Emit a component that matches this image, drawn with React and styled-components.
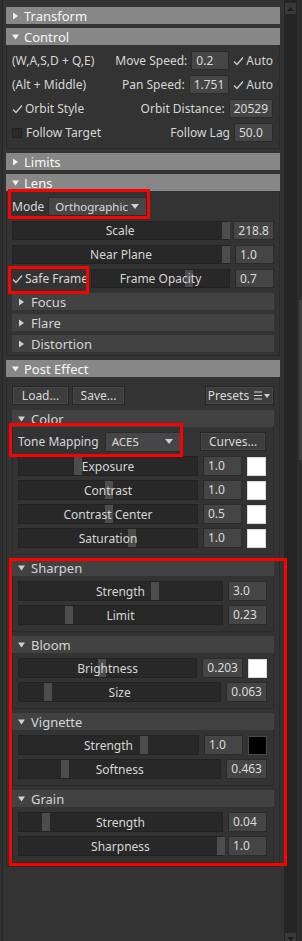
import React from "react";
import styled, { createGlobalStyle } from "styled-components";

const GlobalStyle = createGlobalStyle`
  html, body { margin: 0; padding: 0; background: #333333; }
  body {
    font-family: "Noto Sans", "Open Sans", sans-serif;
    font-size: 12px;
    color: #d4d4d4;
  }
  * { box-sizing: border-box; }
`;

const Page = styled.div`
  position: relative;
  display: flex;
  width: 302px;
  height: 941px;
  overflow: hidden;
  background: #333333;
`;

const Inspector = styled.div`
  flex: 1;
  display: flex;
  flex-direction: column;
  gap: 4px;
  padding: 7px 4px 0 6px;
  background: linear-gradient(to right, #303030 0 2px, #262626 2px 3px, #333333 3px);
`;

const Section = styled.div`
  display: flex;
  flex-direction: column;
`;

const Header = styled.div`
  height: 17px;
  display: flex;
  align-items: center;
  gap: ${(p) => (p.$sub ? 6 : 5)}px;
  padding-left: 6px;
  background: ${(p) => (p.$sub ? "#424242" : "#878787")};
  color: ${(p) => (p.$sub ? "#d4d4d4" : "#f6f6f6")};
  font-size: 13px;
  white-space: nowrap;
`;

const Body = styled.div`
  display: flex;
  flex-direction: column;
  gap: 5px;
  padding: ${(p) => p.$pad || "6px 6px 6px 5px"};
  background: #333333;
  border: 1px solid #2a2a2a;
  border-top: none;
`;

const Stack = styled.div`
  display: flex;
  flex-direction: column;
  gap: 4px;
`;

const SubBody = styled.div`
  display: flex;
  flex-direction: column;
  gap: 4px;
  padding: ${(p) => p.$pad || "5px 6px 6px 5px"};
  border: 1px solid #2a2a2a;
  border-top: none;
`;

const Row = styled.div`
  display: flex;
  align-items: center;
  justify-content: ${(p) => p.$justify || "flex-start"};
  gap: ${(p) => (p.$gap ?? 5)}px;
  height: ${(p) => p.$h || 19}px;
  white-space: nowrap;
`;

const Group = styled.div`
  display: flex;
  align-items: center;
  gap: 4px;
`;

const Label = styled.span`
  color: #d6d6d6;
  font-size: 12px;
`;

const Field = styled.div`
  flex: 0 0 ${(p) => p.$w || 39}px;
  height: ${(p) => p.$h || 19}px;
  line-height: ${(p) => (p.$h || 19) - 2}px;
  padding: 0 4px;
  background: #454545;
  border: 1px solid #2b2b2b;
  color: #dadada;
  font-size: 12px;
`;

const Swatch = styled.div`
  flex: 0 0 19px;
  height: 19px;
  background: ${(p) => p.$color};
  border: 1px solid ${(p) => (p.$color === "#000" ? "#4a4a4a" : "#d8d8d8")};
`;

const Track = styled.div`
  position: relative;
  flex: 1;
  height: ${(p) => p.$h || 19}px;
  display: flex;
  align-items: center;
  justify-content: center;
  background: #282828;
  border: 1px solid #222222;
`;

const Handle = styled.div`
  position: absolute;
  top: 0;
  bottom: 0;
  width: 8px;
  background: #4d4d4d;
`;

const TrackText = styled.span`
  position: relative;
  color: #d6d6d6;
  font-size: 12px;
`;

const Check = styled.span`
  display: inline-flex;
  align-items: center;
  gap: 2px;
  color: #d6d6d6;
  font-size: 12px;
`;

const Box = styled.span`
  width: 10px;
  height: 10px;
  margin-right: 2px;
  background: #2a2a2a;
  border: 1px solid #222;
`;

const Drop = styled.div`
  flex: 0 0 ${(p) => p.$w}px;
  height: ${(p) => p.$h || 19}px;
  display: flex;
  align-items: center;
  justify-content: space-between;
  padding: 0 7px 0 6px;
  background: #464646;
  border: 1px solid #2c2c2c;
  color: #dcdcdc;
  font-size: 11.5px;
`;

const Btn = styled.div`
  flex: 0 0 ${(p) => p.$w}px;
  height: 19px;
  display: flex;
  align-items: center;
  justify-content: center;
  gap: 5px;
  background: #3d3d3d;
  border: 1px solid #262626;
  box-shadow: inset 0 0 0 1px #474747;
  color: #d8d8d8;
  font-size: 12px;
`;

const Spacer = styled.div`
  flex: 1;
`;

const ScrollBar = styled.div`
  flex: 0 0 18px;
  display: flex;
`;

const Rail = styled.div`
  flex: 0 0 13px;
  display: flex;
  flex-direction: column;
  justify-content: space-between;
  padding: 3px 1px 0 1px;
  background: #252525;
`;

const Arrow = styled.div`
  height: 11px;
  display: flex;
  align-items: center;
  justify-content: center;
  background: #3a3a3a;
  margin-bottom: ${(p) => (p.$down ? -3 : 0)}px;
`;

const Edge = styled.div`
  flex: 1;
  display: flex;
  justify-content: flex-end;
  padding-top: 300px;
  background: #2c2c2c;
`;

const Thumb = styled.div`
  width: 3px;
  height: 160px;
  background: #3e3e3e;
`;

const Mark = styled.div`
  position: absolute;
  left: ${(p) => p.$x}px;
  top: ${(p) => p.$y}px;
  width: ${(p) => p.$w}px;
  height: ${(p) => p.$h}px;
  border: 3px solid #ff0000;
  pointer-events: none;
`;

const Tri = ({ open, color = "#f0f0f0" }) => (
  <svg width="7" height="8" viewBox="0 0 7 8">
    {open ? (
      <path d="M0 1.5 L7 1.5 L3.5 6.5 Z" fill={color} />
    ) : (
      <path d="M1 0.5 L6 4 L1 7.5 Z" fill={color} />
    )}
  </svg>
);

const Tick = () => (
  <svg width="11" height="10" viewBox="0 0 11 10">
    <path d="M1 5.5 L4 8.5 L10 1.5" fill="none" stroke="#cfcfcf" strokeWidth="1.3" />
  </svg>
);

const DownCaret = () => (
  <svg width="8" height="5" viewBox="0 0 8 5">
    <path d="M0 0 L8 0 L4 5 Z" fill="#d0d0d0" />
  </svg>
);

const MenuIcon = () => (
  <svg width="17" height="9" viewBox="0 0 17 9">
    <path d="M0 1 H8 M0 4.5 H8 M0 8 H8" stroke="#d0d0d0" strokeWidth="1.2" />
    <path d="M10 3 L16 3 L13 7 Z" fill="#d0d0d0" />
  </svg>
);

const Slider = ({ label, at, h }) => (
  <Track $h={h}>
    <Handle style={{ left: at }} />
    <TrackText>{label}</TrackText>
  </Track>
);

const Prop = ({ label, at, value, swatch, h = 20 }) => (
  <Row $h={h}>
    <Slider label={label} at={at} h={h} />
    <Field $w={39} $h={h}>{value}</Field>
    {swatch && <Swatch $color={swatch} />}
  </Row>
);

const Top = ({ title, open }) => (
  <Header>
    <Tri open={open} />
    {title}
  </Header>
);

const Sub = ({ title, open }) => (
  <Header $sub>
    <Tri open={open} color="#cfcfcf" />
    {title}
  </Header>
);

const effects = [
  {
    title: "Sharpen",
    props: [
      { label: "Strength", at: 132, value: "3.0" },
      { label: "Limit", at: 46, value: "0.23" },
    ],
  },
  {
    title: "Bloom",
    props: [
      { label: "Brightness", at: 79, value: "0.203", swatch: "#fff" },
      { label: "Size", at: 25, value: "0.063" },
    ],
  },
  {
    title: "Vignette",
    props: [
      { label: "Strength", at: 121, value: "1.0", swatch: "#000" },
      { label: "Softness", at: 42, value: "0.463" },
    ],
  },
  {
    title: "Grain",
    props: [
      { label: "Strength", at: 23, value: "0.04" },
      { label: "Sharpness", at: 198, value: "1.0" },
    ],
  },
];

const colorProps = [
  { label: "Exposure", at: 55, value: "1.0" },
  { label: "Contrast", at: 86, value: "1.0" },
  { label: "Contrast Center", at: 86, value: "0.5" },
  { label: "Saturation", at: 109, value: "1.0" },
];

export default function App() {
  return (
    <>
      <GlobalStyle />
      <Page>
        <Inspector>
          <Top title="Transform" />

          <Section>
            <Top title="Control" open />
            <Body>
              <Row $justify="space-between">
                <Label>(W,A,S,D + Q,E)</Label>
                <Group>
                  <Label>Move Speed:</Label>
                  <Field $w={38}>0.2</Field>
                  <Check><Tick />Auto</Check>
                </Group>
              </Row>
              <Row $justify="space-between">
                <Label>(Alt + Middle)</Label>
                <Group>
                  <Label>Pan Speed:</Label>
                  <Field $w={38}>1.751</Field>
                  <Check><Tick />Auto</Check>
                </Group>
              </Row>
              <Row $justify="space-between">
                <Check><Tick />Orbit Style</Check>
                <Group>
                  <Label>Orbit Distance:</Label>
                  <Field>20529</Field>
                </Group>
              </Row>
              <Row $justify="space-between">
                <Check><Box />Follow Target</Check>
                <Group>
                  <Label>Follow Lag</Label>
                  <Field>50.0</Field>
                </Group>
              </Row>
            </Body>
          </Section>

          <Top title="Limits" />

          <Section>
            <Top title="Lens" open />
            <Body $pad="6px 5px 3px 5px">
              <Row $gap={4}>
                <Label>Mode</Label>
                <Drop $w={99}>
                  Orthographic
                  <DownCaret />
                </Drop>
              </Row>
              <Row>
                <Slider label="Scale" at={209} />
                <Field>218.8</Field>
              </Row>
              <Row>
                <Slider label="Near Plane" at={209} />
                <Field>1.0</Field>
              </Row>
              <Row $gap={3}>
                <Check><Tick />Safe Frame</Check>
                <Slider label="Frame Opacity" at={93} />
                <Field $w={39} style={{ marginLeft: 2 }}>0.7</Field>
              </Row>
              <Stack>
                <Sub title="Focus" />
                <Sub title="Flare" />
                <Sub title="Distortion" />
              </Stack>
            </Body>
          </Section>

          <Section>
            <Top title="Post Effect" open />
            <Body $pad="9px 5px 3px 5px">
              <Row $gap={3}>
                <Btn $w={57}>Load...</Btn>
                <Btn $w={53}>Save...</Btn>
                <Spacer />
                <Btn $w={69}>
                  Presets
                  <MenuIcon />
                </Btn>
              </Row>
              <Stack>
                <Section>
                  <Sub title="Color" open />
                  <SubBody $pad="4px 7px 6px 5px">
                    <Row $h={21} $gap={6}>
                      <Label>Tone Mapping</Label>
                      <Drop $w={76} $h={20}>
                        ACES
                        <DownCaret />
                      </Drop>
                      <Spacer />
                      <Btn $w={66}>Curves...</Btn>
                    </Row>
                    {colorProps.map((p) => (
                      <Prop key={p.label} {...p} swatch="#fff" />
                    ))}
                  </SubBody>
                </Section>
                {effects.map((fx) => (
                  <Section key={fx.title}>
                    <Sub title={fx.title} open />
                    <SubBody>
                      {fx.props.map((p) => (
                        <Prop key={p.label} {...p} />
                      ))}
                    </SubBody>
                  </Section>
                ))}
              </Stack>
            </Body>
          </Section>
        </Inspector>

        <ScrollBar>
          <Rail>
            <Arrow>
              <svg width="7" height="4" viewBox="0 0 7 4">
                <path d="M0 4 L7 4 L3.5 0 Z" fill="#1e1e1e" />
              </svg>
            </Arrow>
            <Arrow $down>
              <svg width="7" height="4" viewBox="0 0 7 4">
                <path d="M0 0 L7 0 L3.5 4 Z" fill="#1e1e1e" />
              </svg>
            </Arrow>
          </Rail>
          <Edge>
            <Thumb />
          </Edge>
        </ScrollBar>

        <Mark $x={8} $y={189} $w={142} $h={30} />
        <Mark $x={8} $y={266} $w={81} $h={28} />
        <Mark $x={9} $y={423} $w={174} $h={34} />
        <Mark $x={9} $y={558} $w={278} $h={308} />
      </Page>
    </>
  );
}
